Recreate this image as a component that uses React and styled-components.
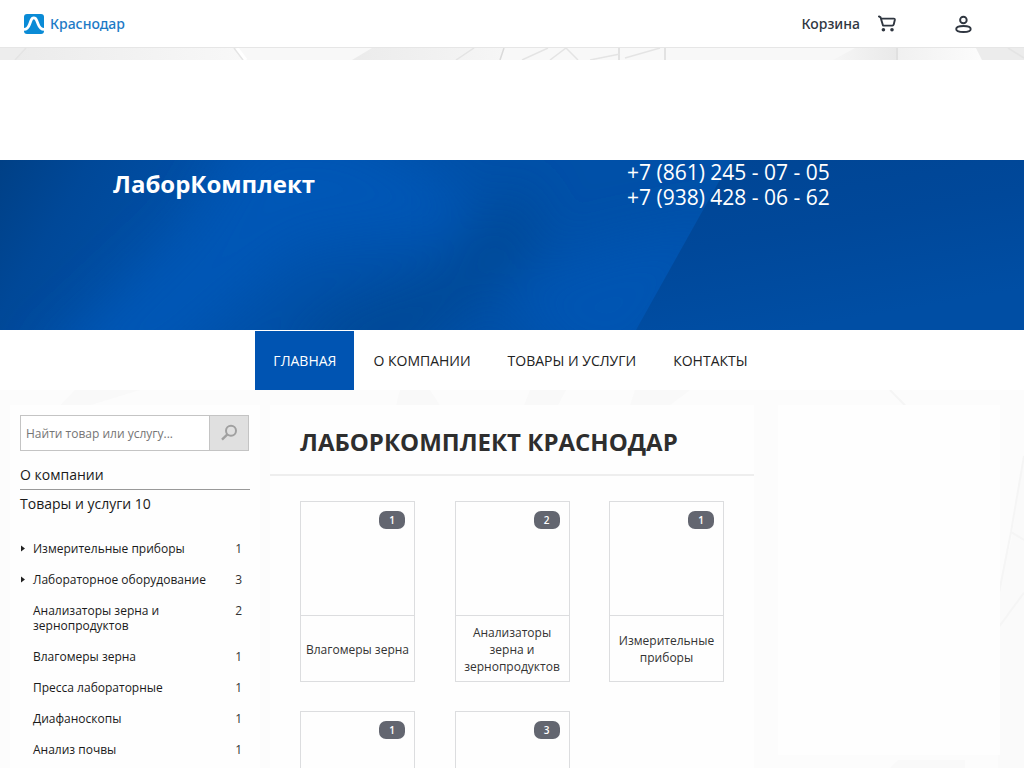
import React, { useState } from "react";
import styled, { createGlobalStyle } from "styled-components";

const GlobalStyle = createGlobalStyle`
  * {
    box-sizing: border-box;
  }

  body {
    margin: 0;
    background: #fdfdfd;
    color: #1a1a1a;
    font-family: "Open Sans", "Noto Sans", sans-serif;
    font-size: 14px;
    overflow-x: hidden;
  }

  a {
    color: inherit;
    text-decoration: none;
  }
`;

const TopBar = styled.header`
  display: flex;
  align-items: center;
  justify-content: space-between;
  height: 48px;
  padding: 0 52px 0 24px;
  background: #fff;
  border-bottom: 1px solid #e6e6e6;
  font-family: "Noto Sans", sans-serif;
  font-weight: 500;
  font-size: 14px;
`;

const CityLink = styled.a`
  display: flex;
  align-items: center;
  gap: 6px;
  color: #1c7ac6;
`;

const UserMenu = styled.div`
  display: flex;
  align-items: center;
  gap: 58px;
  color: #2f3640;
`;

const CartLink = styled.a`
  display: flex;
  align-items: center;
  gap: 18px;
`;

const IconButton = styled.button`
  display: flex;
  padding: 0;
  border: 0;
  background: none;
  color: inherit;
  cursor: pointer;
`;

const Strip = styled.div`
  height: 12px;
  background: #f8f8f8;

  svg {
    display: block;
    width: 100%;
    height: 100%;
  }
`;

const BannerSlot = styled.div`
  height: 100px;
  background: #fff;
`;

const Hero = styled.section`
  position: relative;
  display: grid;
  grid-template-columns: 514fr 284fr;
  min-height: 170px;
  padding: 0 113px;
  background: #004fa5;
  color: #fff;
`;

const HeroArt = styled.svg`
  position: absolute;
  inset: 0;
  width: 100%;
  height: 100%;
`;

const CompanyName = styled.a`
  position: relative;
  padding-top: 7px;
  font-weight: 700;
  font-size: 24px;
  line-height: 33px;
`;

const Phones = styled.div`
  position: relative;
  display: flex;
  flex-direction: column;
  font-size: 21px;
  line-height: 25px;
`;

const Nav = styled.nav`
  display: flex;
  justify-content: center;
  gap: 1px;
  height: 60px;
  padding: 1px 3px 0 0;
  background: #fff;
`;

const NavLink = styled.a`
  display: flex;
  align-items: center;
  padding: 0 18px;
  background: ${({ $active }) => ($active ? "#0054b2" : "transparent")};
  color: ${({ $active }) => ($active ? "#fff" : "#222")};
  text-transform: uppercase;
`;

const Content = styled.div`
  position: relative;
  display: grid;
  grid-template-columns: 250px 1fr 222px;
  align-items: start;
  padding: 15px 24px 0 10px;
`;

const Backdrop = styled.svg`
  position: absolute;
  inset: 0;
  width: 100%;
  height: 100%;
`;

const Panel = styled.div`
  position: relative;
  background: #fefefe;
`;

const Sidebar = styled(Panel)`
  padding: 10px 0 20px 10px;
`;

const Main = styled(Panel)`
  margin: 0 24px 0 10px;
`;

const Aside = styled(Panel)`
  height: 350px;
`;

const SearchForm = styled.form`
  display: flex;
  height: 36px;
  margin-right: 11px;
  border: 1px solid #c4c4c4;
`;

const SearchInput = styled.input`
  flex: 1;
  min-width: 0;
  padding: 0 5px;
  border: 0;
  outline: none;
  background: #fff;
  font-family: inherit;
  font-size: 12px;

  &::placeholder {
    color: #757575;
  }
`;

const SearchButton = styled(IconButton)`
  align-items: center;
  justify-content: center;
  width: 39px;
  border-left: 1px solid #c4c4c4;
  background: #e0e0e0;
  color: #a0a0a0;
`;

const SideLink = styled.a`
  display: block;
  margin-right: 10px;
  padding: ${({ $underlined }) => ($underlined ? "14px 0 4px" : "4px 0")};
  border-bottom: ${({ $underlined }) => ($underlined ? "1px solid #999" : "0")};
  line-height: 20px;
`;

const CategoryList = styled.ul`
  display: flex;
  flex-direction: column;
  gap: 16px;
  margin: 23px 18px 0 0;
  padding: 0;
  list-style: none;
  font-size: 12px;
  line-height: 15px;
`;

const Category = styled.li`
  display: grid;
  grid-template-columns: 13px 1fr 30px;
  align-items: start;
`;

const Arrow = styled.svg`
  width: 6px;
  height: 15px;
`;

const Count = styled.span`
  color: #333;
  text-align: right;
`;

const Title = styled.h1`
  margin: 0;
  padding: 20px 30px 16px;
  border-bottom: 2px solid #eee;
  color: #2e2e2e;
  font-size: 24px;
  line-height: 33px;
  text-transform: uppercase;
`;

const Cards = styled.div`
  display: grid;
  grid-template-columns: repeat(3, 115px);
  justify-content: space-between;
  row-gap: 29px;
  padding: 25px 30px;
`;

const Card = styled.a`
  position: relative;
  display: flex;
  flex-direction: column;
  border: 1px solid #dcdddf;
  color: #333;
`;

const Picture = styled.div`
  height: 114px;
  border-bottom: 1px solid #dcdddf;
`;

const CardTitle = styled.div`
  display: flex;
  align-items: center;
  justify-content: center;
  min-height: 65px;
  padding-top: 1px;
  font-size: 12px;
  line-height: 17px;
  text-align: center;
`;

const Badge = styled.span`
  position: absolute;
  top: 9px;
  right: 9px;
  width: 26px;
  border-radius: 7px;
  background: #636670;
  color: #fff;
  font-weight: 600;
  font-size: 10px;
  line-height: 18px;
  text-align: center;
`;

const navItems = ["Главная", "О компании", "Товары и услуги", "Контакты"];

const categories = [
  { name: "Измерительные приборы", count: 1, nested: true },
  { name: "Лабораторное оборудование", count: 3, nested: true },
  { name: "Анализаторы зерна и зернопродуктов", count: 2 },
  { name: "Влагомеры зерна", count: 1 },
  { name: "Пресса лабораторные", count: 1 },
  { name: "Диафаноскопы", count: 1 },
  { name: "Анализ почвы", count: 1 },
];

const cards = [
  { name: "Влагомеры зерна", count: 1 },
  { name: "Анализаторы зерна и зернопродуктов", count: 2 },
  { name: "Измерительные приборы", count: 1 },
  { name: "Пресса лабораторные", count: 1 },
  { name: "Лабораторное оборудование", count: 3 },
];

const LogoIcon = () => (
  <svg width="20" height="20" viewBox="0 0 20 20" aria-hidden="true">
    <rect width="20" height="20" rx="3" fill="#0a8bd6" />
    <path
      d="M0 15.4C3.2 15.4 4.4 13.6 5.6 10.2L7 6.4C7.7 4.6 8.5 3.9 9.8 3.9C11.2 3.9 12 4.6 12.7 6.4L14.2 10.2C15.5 13.6 16.8 15.4 20 15.4"
      fill="none"
      stroke="#fff"
      strokeWidth="2.8"
    />
  </svg>
);

const CartIcon = () => (
  <svg width="19" height="18" viewBox="0 0 19 18" fill="none" stroke="currentColor" strokeWidth="1.9" aria-hidden="true">
    <path d="M0.9 1.4L2.6 2.4L5 10.6H14.4Q15.4 10.6 15.7 9.6L16.8 5Q17 3.6 15.8 3.6H3.2" strokeLinejoin="round" strokeLinecap="round" />
    <circle cx="5.4" cy="14.8" r="1.8" fill="currentColor" stroke="none" />
    <circle cx="14" cy="14.8" r="1.8" fill="currentColor" stroke="none" />
  </svg>
);

const UserIcon = () => (
  <svg width="17" height="18" viewBox="0 0 17 18" fill="none" stroke="currentColor" strokeWidth="1.9" aria-hidden="true">
    <circle cx="8.4" cy="5" r="3.3" />
    <path d="M8.5 11C12 11 15.7 11.6 15.7 14C15.7 16.5 12 17 8.5 17C5 17 1.2 16.5 1.2 14C1.2 11.6 5 11 8.5 11Z" />
  </svg>
);

const SearchIcon = () => (
  <svg width="18" height="18" viewBox="0 0 18 18" fill="none" stroke="currentColor" aria-hidden="true">
    <circle cx="11" cy="6.8" r="5" strokeWidth="2" />
    <path d="M7.4 10.4L2 15.6" strokeWidth="2.4" />
  </svg>
);

const StripArt = () => (
  <svg viewBox="0 0 1024 12" preserveAspectRatio="none" aria-hidden="true">
    <defs>
      <linearGradient id="stripLeft">
        <stop offset="0" stopColor="#ebebeb" />
        <stop offset="1" stopColor="#f8f8f8" />
      </linearGradient>
      <linearGradient id="stripMid">
        <stop offset="0" stopColor="#ebebeb" />
        <stop offset="1" stopColor="#f6f6f6" />
      </linearGradient>
      <linearGradient id="stripFade">
        <stop offset="0" stopColor="#f0f0f0" />
        <stop offset="1" stopColor="#fcfcfc" />
      </linearGradient>
      <linearGradient id="stripRise">
        <stop offset="0" stopColor="#f6f6f6" />
        <stop offset="1" stopColor="#e9e9e9" />
      </linearGradient>
    </defs>
    <path d="M26 0H234L243 12H15Z" fill="url(#stripLeft)" />
    <path d="M0 0H26L15 12H0Z" fill="#ededed" />
    <path d="M372 0H504L500 12H352Z" fill="url(#stripMid)" />
    <path d="M855 0H896V12H833Z" fill="url(#stripRise)" />
    <path d="M896 0H976L982 12H896Z" fill="url(#stripFade)" />
    <path d="M976 0H1024V12H982Z" fill="#ececec" />
    <path d="M504 0L500 12M897 0V12M619 0V12M665 0V12" stroke="#dadada" strokeWidth="1.5" />
    <path d="M26 0L15 12M234 0L243 12M474 0L456 12M548 0L522 12M566 0L550 12M566 0L578 12M620 6L590 12M660 0L625 10M1008 0L1024 10" stroke="#e4e4e4" strokeWidth="1.5" />
    <path d="M237 0L246 12" stroke="#fff" strokeWidth="3" />
  </svg>
);

const HeroBackground = () => (
  <HeroArt viewBox="0 0 1024 170" preserveAspectRatio="none" aria-hidden="true">
    <defs>
      <linearGradient id="heroBase" gradientUnits="userSpaceOnUse" x1="0" y1="0" x2="170" y2="100">
        <stop offset="0" stopColor="#004086" />
        <stop offset="0.4" stopColor="#004898" />
        <stop offset="1" stopColor="#0050a8" />
      </linearGradient>
      <linearGradient id="heroRight" x1="0" y1="0" x2="0.4" y2="1">
        <stop offset="0" stopColor="#004594" />
        <stop offset="0.5" stopColor="#00489a" />
        <stop offset="1" stopColor="#004ea4" />
      </linearGradient>
      <filter id="heroBlur" x="-20%" y="-60%" width="140%" height="220%">
        <feGaussianBlur stdDeviation="26" />
      </filter>
    </defs>
    <rect width="1024" height="170" fill="url(#heroBase)" />
    <g filter="url(#heroBlur)">
      <path d="M40 210L190 70L250 -30H350L460 30V70L300 90L150 220Z" fill="#0057b6" />
      <path d="M270 200L330 150L440 110L520 20L540 90L400 210Z" fill="#004897" />
      <path d="M500 130L590 90L740 60L640 210L560 200Z" fill="#0054b2" />
    </g>
    <path d="M731 0H1024V170H636Z" fill="url(#heroRight)" />
  </HeroArt>
);

const ContentBackground = () => (
  <Backdrop viewBox="0 0 1024 520" preserveAspectRatio="none" aria-hidden="true">
    <rect width="1024" height="520" fill="#fcfcfc" />
    <path d="M75 0H140L90 15H60ZM400 0H430L440 15H396ZM530 0H566L558 15H524ZM635 0H690L670 15H630Z" fill="#f9f9f9" />
    <path d="M1024 65L1011 150L998 200V420H1024Z" fill="#fafafa" />
    <path d="M1024 65L1011 140L998 205M1011 140L1024 148M1024 200L998 235M890 0L905 15" fill="none" stroke="#f5f5f5" strokeWidth="2" />
    <path d="M898 365H965V378H885Z" fill="#f9f9f9" />
  </Backdrop>
);

const App = () => {
  const [query, setQuery] = useState("");

  return (
    <>
      <GlobalStyle />
      <TopBar>
        <CityLink href="#city">
          <LogoIcon />
          Краснодар
        </CityLink>
        <UserMenu>
          <CartLink href="#cart">
            Корзина
            <CartIcon />
          </CartLink>
          <IconButton type="button" aria-label="Профиль">
            <UserIcon />
          </IconButton>
        </UserMenu>
      </TopBar>
      <Strip>
        <StripArt />
      </Strip>
      <BannerSlot />
      <Hero>
        <HeroBackground />
        <CompanyName href="#home">ЛаборКомплект</CompanyName>
        <Phones>
          <a href="tel:+78612450705">+7 (861) 245 - 07 - 05</a>
          <a href="tel:+79384280662">+7 (938) 428 - 06 - 62</a>
        </Phones>
      </Hero>
      <Nav>
        {navItems.map((item, index) => (
          <NavLink key={item} href="#nav" $active={index === 0}>
            {item}
          </NavLink>
        ))}
      </Nav>
      <Content>
        <ContentBackground />
        <Sidebar>
          <SearchForm onSubmit={(e) => e.preventDefault()}>
            <SearchInput
              type="text"
              aria-label="Поиск"
              placeholder="Найти товар или услугу..."
              value={query}
              onChange={(e) => setQuery(e.target.value)}
            />
            <SearchButton type="submit" aria-label="Найти">
              <SearchIcon />
            </SearchButton>
          </SearchForm>
          <SideLink href="#about" $underlined>
            О компании
          </SideLink>
          <SideLink href="#goods">Товары и услуги 10</SideLink>
          <CategoryList>
            {categories.map(({ name, count, nested }) => (
              <Category key={name}>
                <Arrow viewBox="0 0 6 15" aria-hidden="true">
                  {nested && <path d="M1 4.5L5 7.5L1 10.5Z" fill="#222" />}
                </Arrow>
                <a href="#category">{name}</a>
                <Count>{count}</Count>
              </Category>
            ))}
          </CategoryList>
        </Sidebar>
        <Main as="main">
          <Title>ЛаборКомплект Краснодар</Title>
          <Cards>
            {cards.map(({ name, count }) => (
              <Card key={name} href="#card">
                <Picture />
                <Badge>{count}</Badge>
                <CardTitle>{name}</CardTitle>
              </Card>
            ))}
          </Cards>
        </Main>
        <Aside as="aside" />
      </Content>
    </>
  );
};

export default App;
